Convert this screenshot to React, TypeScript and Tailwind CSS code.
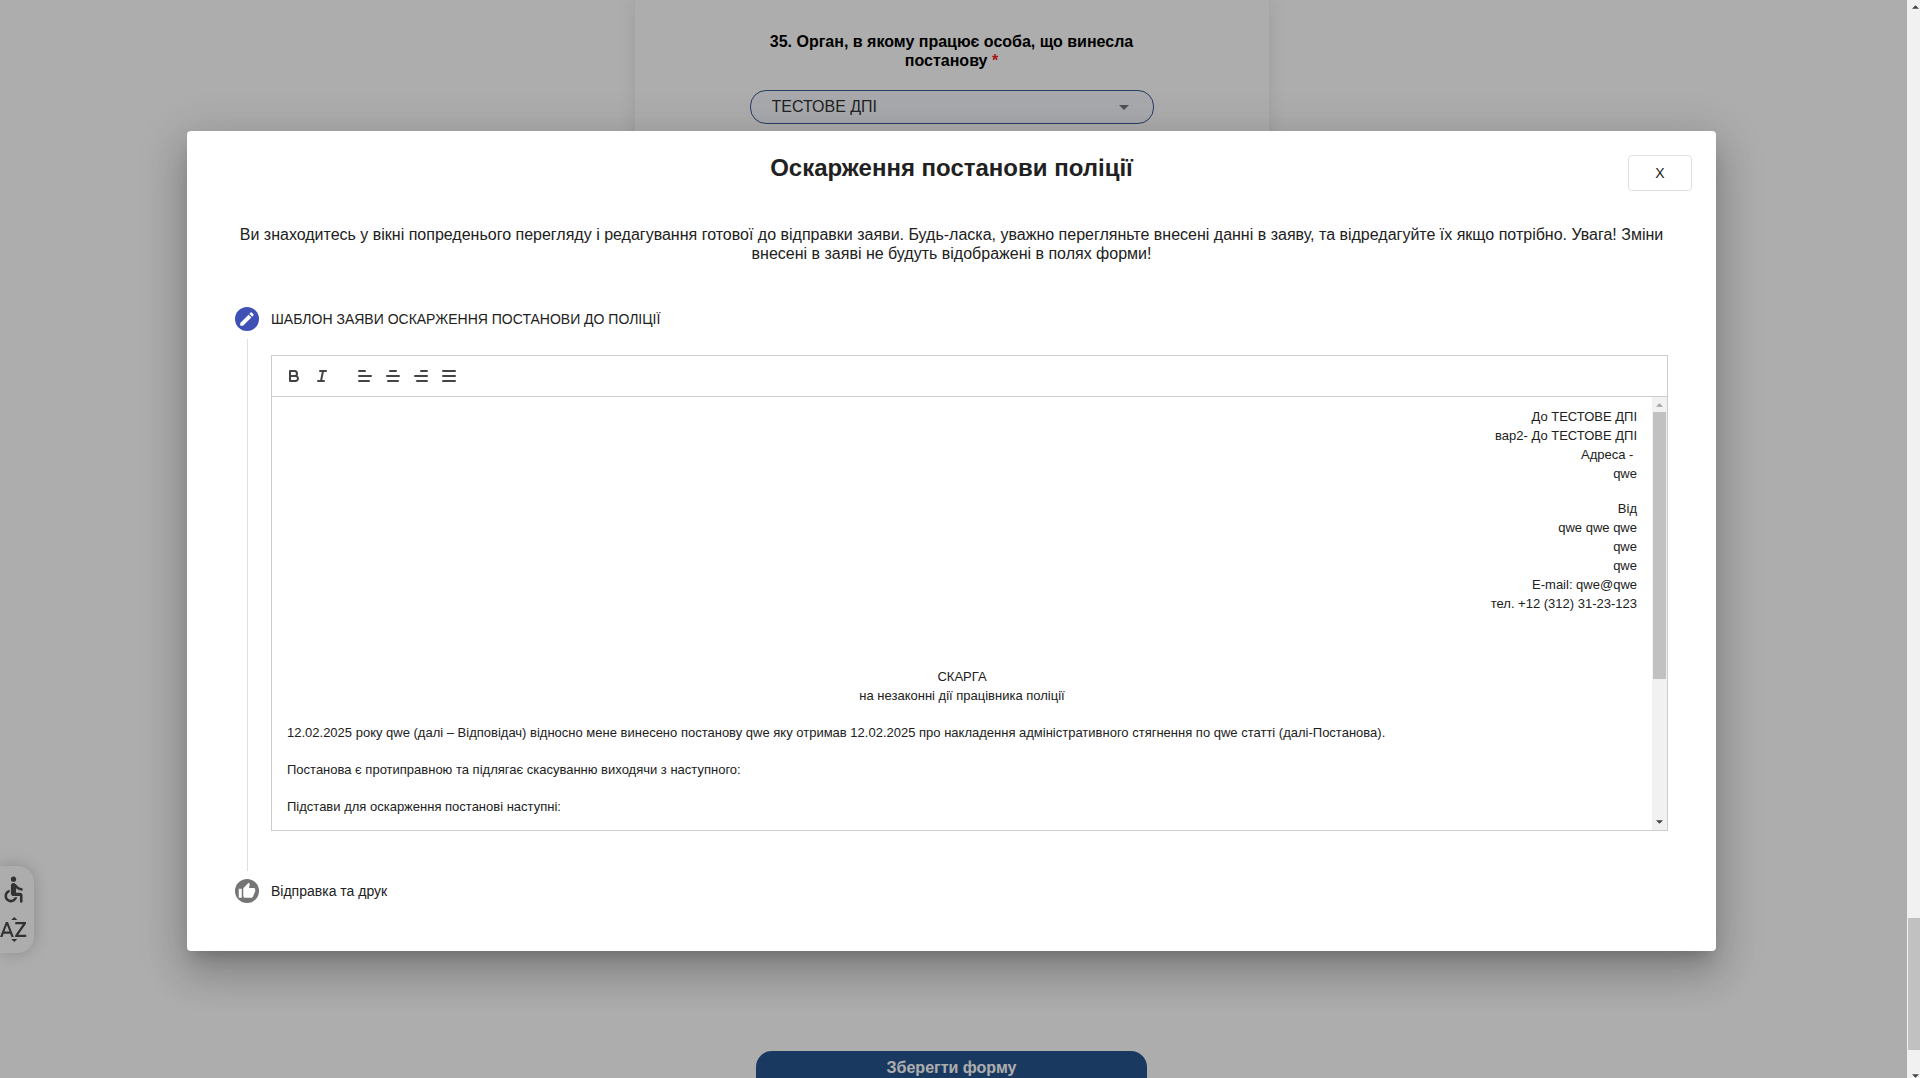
import React from "react";
import { MdAccessible, MdCreate, MdSortByAlpha, MdThumbUp } from "react-icons/md";

const tools: { name: string; shape: React.ReactNode; gap?: boolean }[] = [
  {
    name: "Жирний",
    shape: (
      <>
        <path d="M5,4H9.5A2.5,2.5,0,0,1,12,6.5v0A2.5,2.5,0,0,1,9.5,9H5A0,0,0,0,1,5,9V4A0,0,0,0,1,5,4Z" />
        <path d="M5,9h5.5A2.5,2.5,0,0,1,13,11.5v0A2.5,2.5,0,0,1,10.5,14H5a0,0,0,0,1,0,0V9A0,0,0,0,1,5,9Z" />
      </>
    ),
  },
  { name: "Курсив", shape: <path d="M7 4H13M5 14H11M8 14L10 4" /> },
  { name: "Ліворуч", shape: <path d="M3 9H15M3 14H13M3 4H9" />, gap: true },
  { name: "По центру", shape: <path d="M3 9H15M4 14H14M6 4H12" /> },
  { name: "Праворуч", shape: <path d="M3 9H15M5 14H15M9 4H15" /> },
  { name: "По ширині", shape: <path d="M3 9H15M3 14H15M3 4H15" /> },
];

function Arrow({ up, className }: { up?: boolean; className: string }) {
  return (
    <svg viewBox="0 0 8 4" className={className} fill="currentColor" aria-hidden="true">
      <path d={up ? "M0 4L4 0L8 4Z" : "M0 0L4 4L8 0Z"} />
    </svg>
  );
}

function Toolbar() {
  return (
    <div className="flex h-[41px] items-center border-b border-[#ccc] px-2">
      {tools.map((t) => (
        <button
          key={t.name}
          type="button"
          aria-label={t.name}
          className={t.gap ? "ml-[15px] flex h-6 w-7 items-center justify-center" : "flex h-6 w-7 items-center justify-center"}
        >
          <svg viewBox="0 0 18 18" className="size-[18px]" fill="none" stroke="#444" strokeWidth="2" strokeLinecap="round" strokeLinejoin="round">
            {t.shape}
          </svg>
        </button>
      ))}
    </div>
  );
}

function Editor() {
  return (
    <div className="flex flex-col border border-[#ccc]">
      <Toolbar />
      <div className="flex h-[433px]">
        <div
          role="textbox"
          aria-multiline="true"
          aria-label="Текст заяви"
          contentEditable
          suppressContentEditableWarning
          className="min-w-0 flex-1 overflow-hidden px-[15px] pt-[10px] text-[13px] leading-[19px] outline-none"
        >
          <div className="mb-4 text-right">
            <p>До ТЕСТОВЕ ДПІ</p>
            <p>вар2- До ТЕСТОВЕ ДПІ</p>
            <p>Адреса -&nbsp;</p>
            <p>qwe</p>
          </div>
          <div className="mb-[54px] text-right">
            <p>Від</p>
            <p>qwe qwe qwe</p>
            <p>qwe</p>
            <p>qwe</p>
            <p>E-mail: qwe@qwe</p>
            <p>тел. +12 (312) 31-23-123</p>
          </div>
          <div className="mb-[18px] text-center">
            <p>СКАРГА</p>
            <p>на незаконні дії працівника поліції</p>
          </div>
          <p className="mb-[18px]">
            12.02.2025 року qwe (далі – Відповідач) відносно мене винесено постанову qwe яку отримав 12.02.2025 про накладення адміністративного стягнення по qwe статті (далі-Постанова).
          </p>
          <p className="mb-[18px]">Постанова є протиправною та підлягає скасуванню виходячи з наступного:</p>
          <p>Підстави для оскарження постанові наступні:</p>
        </div>
        <div className="flex w-[15px] flex-col items-center bg-[#f1f1f1]" aria-hidden="true">
          <div className="flex h-[15px] items-center">
            <Arrow up className="h-1 w-[7px] text-[#a3a3a3]" />
          </div>
          <div className="h-[267px] w-[13px] bg-[#c1c1c1]" />
          <div className="mt-auto flex h-4 items-center">
            <Arrow className="h-1 w-[7px] text-[#444]" />
          </div>
        </div>
      </div>
    </div>
  );
}

function Dialog() {
  return (
    <div
      role="dialog"
      aria-labelledby="dialog-title"
      className="w-full rounded bg-white p-6 text-[#212121] shadow-[0_11px_15px_-7px_rgba(0,0,0,0.2),0_24px_38px_3px_rgba(0,0,0,0.14),0_9px_46px_8px_rgba(0,0,0,0.12)]"
    >
      <header className="grid grid-cols-[64px_1fr_64px] items-start">
        <h2 id="dialog-title" className="col-start-2 text-center text-2xl leading-[26px] font-bold">
          Оскарження постанови поліції
        </h2>
        <button type="button" className="h-9 rounded border border-[#e0e0e0] text-sm">
          X
        </button>
      </header>
      <p className="mt-[34px] px-6 text-center text-base leading-[19px]">
        Ви знаходитесь у вікні попреденього перегляду і редагування готової до відправки заяви. Будь-ласка, уважно перегляньте внесені данні в заяву, та відредагуйте їх якщо потрібно. Увага! Зміни внесені в заяві не будуть відображені в полях форми!
      </p>
      <ol className="mt-11 px-6 text-sm">
        <li>
          <div className="flex items-center gap-3">
            <span className="flex size-6 items-center justify-center rounded-full bg-[#3f51b5] text-white">
              <MdCreate size={18} />
            </span>
            <span>ШАБЛОН ЗАЯВИ ОСКАРЖЕННЯ ПОСТАНОВИ ДО ПОЛІЦІЇ</span>
          </div>
          <div className="mt-2 ml-3 border-l border-[#e0e0e0] pt-4 pb-10 pl-[23px]">
            <Editor />
          </div>
        </li>
        <li className="mt-2 mb-6 flex items-center gap-3">
          <span className="flex size-6 items-center justify-center rounded-full bg-[#757575] text-white">
            <MdThumbUp size={18} />
          </span>
          <span>Відправка та друк</span>
        </li>
      </ol>
    </div>
  );
}

export default function App() {
  return (
    <div className="flex h-screen overflow-hidden bg-white font-['Liberation_Sans',Arial,sans-serif]">
      <div className="relative min-w-0 flex-1 overflow-hidden">
        <main className="flex h-full flex-col items-center justify-between pr-1">
          <form className="flex h-1/2 w-[634px] flex-col items-center pt-8 shadow-[0_0_16px_rgba(0,0,0,0.1)]">
            <label htmlFor="organ" className="w-[404px] text-center text-base leading-[19px] font-bold text-black">
              35. Орган, в якому працює особа, що винесла постанову <span className="text-[#f5222d]">*</span>
            </label>
            <div className="relative mt-5 w-[404px]">
              <select id="organ" className="h-[34px] w-full appearance-none rounded-2xl border border-[#3d5a96] bg-[#f6faff] px-[21px] text-base text-[#333]">
                <option>ТЕСТОВЕ ДПІ</option>
              </select>
              <Arrow className="pointer-events-none absolute top-[15px] right-[25px] h-[5px] w-[10px] text-[#777]" />
            </div>
          </form>
          <div className="h-[27px] shrink-0">
            <button type="button" className="h-[34px] w-[391px] rounded-t-2xl bg-[#26558f] text-base font-bold text-white">
              Зберегти форму
            </button>
          </div>
        </main>

        <aside className="absolute top-[866px] left-0 flex w-[34px] flex-col items-end gap-[9px] rounded-r-2xl bg-white py-2 pr-[5px] text-[#4a4a4a] shadow-[0_0_16px_rgba(0,0,0,0.2)]">
          <button type="button" aria-label="Доступність">
            <MdAccessible size={31} />
          </button>
          <button type="button" aria-label="Розмір тексту">
            <MdSortByAlpha size={31} />
          </button>
        </aside>

        <div className="absolute inset-0 flex items-start bg-black/32 pt-[131px] pr-[191px] pl-[187px]">
          <Dialog />
        </div>
      </div>

      <div className="flex w-[13px] flex-col items-end bg-[#f1f1f1]" aria-hidden="true">
        <Arrow up className="mt-[5px] mr-px h-1 w-[7px] text-[#444]" />
        <div className="mt-auto h-[132px] w-3 bg-[#c1c1c1]" />
        <Arrow className="mt-6 mr-px h-1 w-[7px] text-[#444]" />
      </div>
    </div>
  );
}
